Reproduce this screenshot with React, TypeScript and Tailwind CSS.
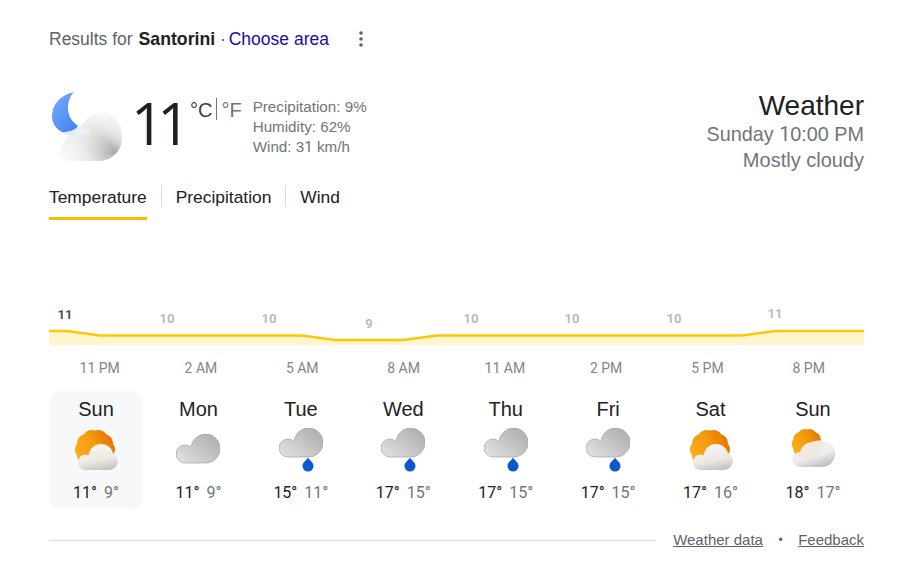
import { useId } from "react";

const font = "font-['Liberation_Sans','Arial',sans-serif]";
// Liberation's 1 has a foot, Roboto's doesn't, same width otherwise
const digits = "font-['Roboto','Liberation_Sans',sans-serif]";

const hours = ["11 PM", "2 AM", "5 AM", "8 AM", "11 AM", "2 PM", "5 PM", "8 PM"];

type Kind = "sun" | "cloud" | "rain" | "sunLight";

const days: { name: string; hi: number; lo: number; kind: Kind }[] = [
  { name: "Sun", hi: 11, lo: 9, kind: "sun" },
  { name: "Mon", hi: 11, lo: 9, kind: "cloud" },
  { name: "Tue", hi: 15, lo: 11, kind: "rain" },
  { name: "Wed", hi: 17, lo: 15, kind: "rain" },
  { name: "Thu", hi: 17, lo: 15, kind: "rain" },
  { name: "Fri", hi: 17, lo: 15, kind: "rain" },
  { name: "Sat", hi: 17, lo: 16, kind: "sun" },
  { name: "Sun", hi: 18, lo: 17, kind: "sunLight" },
];

const chartLabels = [
  { x: 16, y: 23, t: "11", dark: true },
  { x: 118, y: 26.5, t: "10" },
  { x: 220, y: 26.5, t: "10" },
  { x: 320, y: 31.5, t: "9" },
  { x: 422, y: 26.5, t: "10" },
  { x: 523, y: 26.5, t: "10" },
  { x: 625, y: 26.5, t: "10" },
  { x: 726, y: 21.5, t: "11" },
];

const linePoints =
  "0,35 18,35 51,39.5 253,39.5 286,44 354,44 388,39.5 693,39.5 726,35 815,35";

const cloudPath =
  "M9 29H29.5A14.5 14.5 0 1 0 16 9.5C15.5 11 15 12.5 14.5 13A9 9 0 0 0 9 11 9 9 0 0 0 9 29Z";

const bigCloudPath =
  "M3 69H46C60 69 70 59 70 45 70 31 62 21 50 21 43 21 37 25 33 31 24 37 13 44 8 58 7 62 5 66 3 69Z";

// scalloped sun edge, ten bumps round the centre
function scallop(cx: number, cy: number, r: number, bumps = 10) {
  const arc = r * 0.55;
  let d = "";
  for (let i = 0; i <= bumps; i++) {
    const a = (i / bumps) * Math.PI * 2 - Math.PI / 2;
    const x = (cx + r * Math.cos(a)).toFixed(2);
    const y = (cy + r * Math.sin(a)).toFixed(2);
    d += i === 0 ? `M${x} ${y}` : `A${arc.toFixed(2)} ${arc.toFixed(2)} 0 0 1 ${x} ${y}`;
  }
  return d + "Z";
}

function GrayCloud() {
  const id = useId();
  return (
    <svg width="44" height="30" viewBox="0 0 44 30" className="block">
      <defs>
        <linearGradient id={id} x1="0" y1="0.9" x2="1" y2="0.1">
          <stop offset="0" stopColor="#e2e2e2" />
          <stop offset="0.5" stopColor="#c6c6c6" />
          <stop offset="1" stopColor="#acacac" />
        </linearGradient>
      </defs>
      <path d={cloudPath} fill={`url(#${id})`} stroke="#a2a2a2" strokeWidth="0.7" />
    </svg>
  );
}

function RainIcon() {
  return (
    <div className="relative h-[44px] w-[44px]">
      <GrayCloud />
      <svg width="12" height="15" viewBox="0 0 12 15" className="absolute left-[23px] top-[29px]">
        <path d="M6 .5C7 3 11.5 5 11.5 9A5.5 5.5 0 0 1 .5 9C.5 5 5 3 6 .5Z" fill="#0b57d0" />
      </svg>
    </div>
  );
}

function SunCloudIcon({ light }: { light?: boolean }) {
  const id = useId();
  return (
    <svg width="46" height="44" viewBox="0 0 46 44" className="block">
      <defs>
        <linearGradient id={`${id}s`} x1="0.1" y1="0.6" x2="0.9" y2="0.15">
          <stop offset="0" stopColor="#fbaa1c" />
          <stop offset="0.5" stopColor="#f59a0e" />
          <stop offset="1" stopColor="#e47400" />
        </linearGradient>
        <linearGradient id={`${id}c`} x1="0.3" y1="0" x2="0.6" y2="1">
          <stop offset="0" stopColor="#fbf8f4" />
          <stop offset="0.65" stopColor="#ebe7e2" />
          <stop offset="1" stopColor="#c8c4bf" />
        </linearGradient>
        <linearGradient id={`${id}l`} x1="0.2" y1="0" x2="0.7" y2="1">
          <stop offset="0" stopColor="#f7f3ee" />
          <stop offset="0.6" stopColor="#ececec" />
          <stop offset="1" stopColor="#b8b8b8" />
        </linearGradient>
      </defs>
      {light ? (
        <g>
          <path d={scallop(17, 16, 14.5)} fill={`url(#${id}s)`} />
          <path
            d="M10 39H32A13 13 0 0 0 36 13.6C32 12 26 12 22 14A13 13 0 0 0 10 24 7.5 7.5 0 0 0 10 39Z"
            fill={`url(#${id}l)`}
            opacity="0.94"
          />
        </g>
      ) : (
        <g>
          <path d={scallop(22, 21.5, 19)} fill={`url(#${id}s)`} />
          <path
            d="M12.5 42H36A9 9 0 0 0 40 25 12.5 12.5 0 0 0 15.5 27.5 8 8 0 0 0 12.5 26.5 7.75 7.75 0 0 0 12.5 42Z"
            fill={`url(#${id}c)`}
          />
        </g>
      )}
    </svg>
  );
}

function DayIcon({ kind }: { kind: Kind }) {
  if (kind === "rain") return <RainIcon />;
  if (kind === "cloud")
    return (
      <div className="h-[44px] pt-[6px]">
        <GrayCloud />
      </div>
    );
  return <SunCloudIcon light={kind === "sunLight"} />;
}

function MoonCloud() {
  return (
    <svg width="72" height="72" viewBox="0 0 72 72" className="block shrink-0">
      <defs>
        <linearGradient id="moonFill" x1="0" y1="0" x2="0.8" y2="1">
          <stop offset="0" stopColor="#7eabf8" />
          <stop offset="1" stopColor="#4285f4" />
        </linearGradient>
        <linearGradient id="moonGlow" x1="0" y1="0" x2="1" y2="0">
          <stop offset="0" stopColor="#dfe8fb" />
          <stop offset="0.7" stopColor="#eef2fc" />
          <stop offset="1" stopColor="#f4f4f6" stopOpacity="0.3" />
        </linearGradient>
        <linearGradient id="bigCloud" x1="0.05" y1="0.95" x2="1" y2="0.35">
          <stop offset="0" stopColor="#ffffff" />
          <stop offset="0.35" stopColor="#e8e8e8" />
          <stop offset="0.72" stopColor="#a9a9a9" />
          <stop offset="0.9" stopColor="#d6d6d6" />
          <stop offset="1" stopColor="#e6e6e6" />
        </linearGradient>
        <linearGradient id="bigCloudTop" x1="0.3" y1="0" x2="0.6" y2="0.9">
          <stop offset="0" stopColor="#ffffff" stopOpacity="1" />
          <stop offset="0.55" stopColor="#f2f2f2" stopOpacity="0.7" />
          <stop offset="1" stopColor="#ffffff" stopOpacity="0" />
        </linearGradient>
      </defs>
      <path
        d="M22 0C8 3 0 13 0 24 0 32 5 38 12 41 18 43 22 40 26 34 19 29 16 23 16 16 16 9 18 4 22 0Z"
        fill="url(#moonFill)"
      />
      <path d={bigCloudPath} fill="url(#bigCloud)" />
      <path d={bigCloudPath} fill="url(#bigCloudTop)" />
      <path d="M9 41C15 39 22 40 26 34L34 36 41 38C36 44 20 46 9 41Z" fill="url(#moonGlow)" />
    </svg>
  );
}

function TabDivider() {
  return <div className="mx-[14px] h-[22px] w-px bg-[#dadce0]" />;
}

export default function App() {
  return (
    <div className={`${font} h-[576px] w-[907px] overflow-hidden bg-white pl-[49px] pr-[43px] pt-[29px]`}>
      <div className="flex h-[20px] items-center text-[17.5px] leading-[20px] text-[#5f6368]">
        <span>
          Results for <b className="ml-[1px] text-[17.7px] font-bold text-[#202124]">Santorini</b> ·{" "}
          <span className="ml-[-2px] text-[#1a0dab]">Choose area</span>
        </span>
        <svg width="4" height="16" viewBox="0 0 4 16" className="ml-[30px]" fill="#5f6368">
          <circle cx="2" cy="2" r="1.8" />
          <circle cx="2" cy="8" r="1.8" />
          <circle cx="2" cy="14" r="1.8" />
        </svg>
      </div>

      <div className="mt-[41px] flex h-[75px] justify-between">
        <div className="flex">
          <div className="ml-[3px] pt-[2px]">
            <MoonCloud />
          </div>
          <div className="ml-[7px] mt-[1px] w-[59px] font-['Open_Sans','Liberation_Sans',sans-serif] text-[58px] leading-[64px] tracking-[-7px] text-[#202124]">
            11
          </div>
          <div className="mt-[8px] flex h-[24px] items-start text-[20px] leading-[24px]">
            <span className="text-[#3c4043]">°C</span>
            <span className="mx-[4px] h-[22px] w-px bg-[#70757a]" />
            <span className="text-[#70757a]">°F</span>
          </div>
          <div className="ml-[11px] mt-[7px] text-[15.2px] leading-[20px] text-[#70757a]">
            <div>Precipitation: 9%</div>
            <div>Humidity: 62%</div>
            <div>
              Wind: 3<span className={digits}>1</span> km/h
            </div>
          </div>
        </div>
        <div className="text-right">
          <div className="text-[28px] leading-[32px] text-[#202124]">Weather</div>
          <div className="mt-[-1px] text-[19.8px] leading-[26px] text-[#70757a]">
            Sunday <span className={digits}>1</span>0:00 PM
          </div>
          <div className="mt-[-1px] text-[20px] leading-[26px] text-[#70757a]">Mostly cloudy</div>
        </div>
      </div>

      <div className="mt-[20px] flex h-[35px] items-start text-[17.4px] leading-[24px] text-[#202124]">
        <div className="h-[35px] border-b-[3px] border-[#fbbc04]">Temperature</div>
        <TabDivider />
        <div>Precipitation</div>
        <TabDivider />
        <div>Wind</div>
      </div>

      <svg width="815" height="60" viewBox="0 0 815 60" className="mt-[76px] block">
        <polygon points={`${linePoints} 815,49 0,49`} fill="#fef5cc" />
        <polyline points={linePoints} fill="none" stroke="#fbc707" strokeWidth="2.5" />
        {chartLabels.map((l) => (
          <text
            key={l.x}
            x={l.x}
            y={l.y}
            textAnchor="middle"
            fontSize="13"
            fontWeight="700"
            fontFamily="Roboto, 'Liberation Sans', sans-serif"
            fill={l.dark ? "#4d5156" : "#b9bbbe"}
          >
            {l.t}
          </text>
        ))}
      </svg>

      <div className={`${digits} mt-[2px] flex w-[815px]`}>
        {hours.map((h) => (
          <div key={h} className="w-[101.3px] text-center text-[14px] leading-[20px] text-[#80868b]">
            {h}
          </div>
        ))}
      </div>

      <div className="mt-[13px] flex w-[811px] justify-between">
        {days.map((d, i) => (
          <div
            key={i}
            className={`flex h-[118px] w-[94px] flex-col items-center rounded-[12px] pt-[6px] ${i === 0 ? "bg-[#f7f8fa]" : ""}`}
          >
            <div className="text-[20px] leading-[24px] text-[#202124]">{d.name}</div>
            <div className="mt-[7px] flex h-[44px] justify-center">
              <DayIcon kind={d.kind} />
            </div>
            <div className={`${digits} mt-[11px] text-[16px] leading-[20px]`}>
              <span className="text-[#202124]">{d.hi}°</span>
              <span className="ml-[7px] text-[#70757a]">{d.lo}°</span>
            </div>
          </div>
        ))}
      </div>

      <div className="mt-[21px] flex items-center text-[15px] leading-[20px] text-[#5f6368]">
        <div className="h-px flex-1 bg-[#dadce0]" />
        <span className="ml-[17px] underline">Weather data</span>
        <span className="mx-[15.5px] text-[12px]">•</span>
        <span className="underline">Feedback</span>
      </div>
    </div>
  );
}
